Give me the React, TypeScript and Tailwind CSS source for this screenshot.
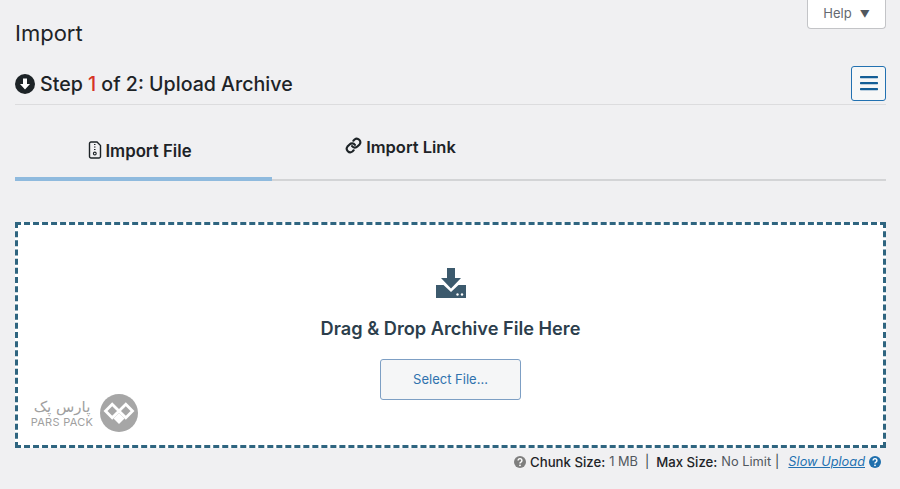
const fontStack = "font-['Inter','Liberation_Sans',sans-serif]";

function FileIcon() {
  return (
    <svg viewBox="0 0 14 18" className="h-[18px] w-[14px]" fill="none" stroke="#1d2327" strokeWidth="1.4">
      <path d="M1.5 2.5a1.5 1.5 0 0 1 1.5-1.5h6l3.5 3.5V15.5a1.5 1.5 0 0 1-1.5 1.5H3a1.5 1.5 0 0 1-1.5-1.5z" />
      <path d="M6 3.5h1.5M6 6h1.5M6 8.5h1.5" strokeWidth="1.2" />
      <circle cx="6.8" cy="12.5" r="1.4" strokeWidth="1.1" />
    </svg>
  );
}

function LinkIcon() {
  return (
    <svg viewBox="0 0 24 24" className="h-[17px] w-[17px]" fill="none" stroke="#1d2327" strokeWidth="3" strokeLinecap="round">
      <path d="M10 13a5 5 0 0 0 7.5.5l3-3a5 5 0 0 0-7-7l-1.7 1.7" />
      <path d="M14 11a5 5 0 0 0-7.5-.5l-3 3a5 5 0 0 0 7 7l1.7-1.7" />
    </svg>
  );
}

function StepIcon() {
  return (
    <svg viewBox="0 0 20 20" className="h-[20px] w-[20px]">
      <circle cx="10" cy="10" r="10" fill="#1d2327" />
      <path d="M8 4.5h4V10h3l-5 5.5L5 10h3z" fill="#fff" />
    </svg>
  );
}

function DownloadIcon() {
  return (
    <svg viewBox="0 0 30 30" className="h-[30px] w-[30px]">
      <path d="M11 0h8v10h6l-10 10.5L5 10h6z" fill="#3c5a6d" />
      <path d="M0 17h7.5l7.5 7 7.5-7H30v13H0z" fill="#3c5a6d" />
      <circle cx="21.5" cy="26.5" r="1.2" fill="#fff" />
      <circle cx="26" cy="26.5" r="1.2" fill="#fff" />
    </svg>
  );
}

function MenuBars() {
  return (
    <svg viewBox="0 0 18 16" className="h-[16px] w-[18px]" fill="#135e96">
      <rect x="0" y="1" width="18" height="2.2" rx="0.6" />
      <rect x="0" y="7" width="18" height="2.2" rx="0.6" />
      <rect x="0" y="13" width="18" height="2.2" rx="0.6" />
    </svg>
  );
}

function HelpDot({ color }: { color: string }) {
  return (
    <svg viewBox="0 0 20 20" className="h-[12px] w-[12px] shrink-0">
      <circle cx="10" cy="10" r="10" fill={color} />
      <path d="M6.8 7.6a3.2 3.2 0 1 1 4.8 2.8c-1 .6-1.6 1-1.6 2" fill="none" stroke="#fff" strokeWidth="2.4" />
      <circle cx="10" cy="15.6" r="1.5" fill="#fff" />
    </svg>
  );
}

function LogoMark() {
  return (
    <svg viewBox="0 0 38 38" className="h-[38px] w-[38px]">
      <circle cx="19" cy="19" r="19" fill="#a6a6a6" />
      <g fill="none" stroke="#fff" strokeWidth="2.8">
        <path d="M5.5 17l6.7-6.7L19 17l-6.800 6.700z" />
        <path d="M19 17l6.800-6.700 6.700 6.700-6.700 6.700z" />
      </g>
      <path d="M13.500 24.500l5.500-5.500 5.500 5.500L19 30z" fill="#fff" />
    </svg>
  );
}

export default function App() {
  return (
    <div className={`h-[489px] w-[900px] overflow-hidden bg-[#f0f0f2] pl-[15px] pr-[14px] ${fontStack}`}>
      {/* page title + help tab */}
      <div className="flex h-[45px] items-start justify-between">
        <h1 className="pt-[20px] text-[22px] leading-[26px] font-normal text-[#1d2327]">Import</h1>
        <button
          type="button"
          className="flex h-[29px] w-[79px] items-center justify-center gap-[8px] rounded-b-[4px] border border-t-0 border-[#c3c4c7] bg-white text-[13px] text-[#646970]"
        >
          Help
          <span className="text-[10px] text-[#50575e]">▼</span>
        </button>
      </div>

      {/* step header */}
      <div className="flex h-[60px] items-center justify-between border-b border-[#dcdcde] pt-[20px] pb-[3px]">
        <div className="mt-[1px] flex items-center gap-[5px] text-[19.6px] leading-[24px] font-medium text-[#1d2327]">
          <StepIcon />
          <span>
            Step <span className="text-[#d63426]">1</span> of 2: Upload Archive
          </span>
        </div>
        <button
          type="button"
          className="flex h-[35px] w-[35px] items-center justify-center rounded-[3px] border border-[#2271b1] bg-[#f6f7f7]"
        >
          <MenuBars />
        </button>
      </div>

      {/* tabs */}
      <div className="flex h-[76px] border-b-2 border-[#d3d4d6]">
        <div className="-mb-[2px] flex w-[257px] items-start justify-center gap-[3px] border-b-[4px] border-[#8fbade] pt-[36px] pr-[7px]">
          <FileIcon />
          <span className="text-[16.8px] leading-[20px] font-semibold text-[#1d2327]">Import File</span>
        </div>
        <div className="flex w-[257px] items-start justify-center gap-[4px] pt-[32px]">
          <LinkIcon />
          <span className="text-[16.5px] leading-[20px] font-semibold text-[#1d2327]">Import Link</span>
        </div>
      </div>

      {/* drop zone */}
      <div className="relative mt-[41px] flex h-[226px] flex-col items-center border-[3px] border-dashed border-[#2f6580] bg-white pt-[43px]">
        <DownloadIcon />
        <div className="mt-[18px] text-[18.2px] leading-[24px] font-semibold text-[#2c3e4c]">
          Drag &amp; Drop Archive File Here
        </div>
        <button
          type="button"
          className="mt-[19px] h-[41px] w-[141px] rounded-[3px] border border-[#7d9fc4] bg-[#f5f6f7] text-[13px] text-[#2f72ae]"
        >
          Select File...
        </button>

        {/* watermark */}
        <div className="absolute bottom-[13px] left-[14px] flex items-center gap-[8px]">
          <div className="flex w-[60px] flex-col items-center leading-none text-[#a0a0a0]">
            <span dir="rtl" className="font-['DejaVu_Sans',sans-serif] text-[15px] leading-[16px] whitespace-nowrap">
              پارس پک
            </span>
            <span className="mt-[2px] text-[11px] leading-[11px] tracking-[0.3px] whitespace-nowrap uppercase">Pars Pack</span>
          </div>
          <LogoMark />
        </div>
      </div>

      {/* footer info */}
      <div className="mt-[6px] flex items-center justify-end gap-[4px] pr-[5px] text-[12.8px] leading-[16px] text-[#50575e]">
        <HelpDot color="#7e7e7e" />
        <span className="text-[13.2px] font-medium text-[#1d2327]">Chunk Size:</span>
        <span>1 MB</span>
        <span className="mx-[3px] text-[#3c434a]">|</span>
        <span className="text-[13.2px] font-medium text-[#1d2327]">Max Size:</span>
        <span>No Limit</span>
        <span className="text-[#3c434a]">|</span>
        <a href="#slow" className="ml-[5px] text-[#2271b1] italic underline">
          Slow Upload
        </a>
        <HelpDot color="#1f6fad" />
      </div>
    </div>
  );
}
